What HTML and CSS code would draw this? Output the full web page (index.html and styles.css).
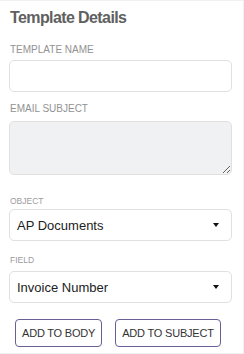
FILE: index.html
```html
<!DOCTYPE html>
<html lang="en">
<head>
  <meta charset="UTF-8" />
  <meta name="viewport" content="width=device-width, initial-scale=1.0" />
  <title>Template Details</title>
  <link rel="stylesheet" href="styles.css">
</head>
<body>
  <div class="card">
    <h2 class="title">Template Details</h2>

    <div class="field name">
      <label class="label">Template Name</label>
      <input class="input" type="text" />
    </div>

    <div class="field subject">
      <label class="label">Email Subject</label>
      <textarea class="input area"></textarea>
    </div>

    <div class="field object">
      <label class="label small">Object</label>
      <div class="select">
        <span>AP Documents</span>
        <span class="caret"></span>
      </div>
    </div>

    <div class="field pick">
      <label class="label small">Field</label>
      <div class="select">
        <span>Invoice Number</span>
        <span class="caret"></span>
      </div>
    </div>

    <div class="actions">
      <button class="btn">ADD TO BODY</button>
      <button class="btn">ADD TO SUBJECT</button>
    </div>
  </div>
</body>
</html>
```

FILE: styles.css
```css
body {
  margin: 0;
  font-family: "Liberation Sans", Arial, sans-serif;
  background: #fff;
}

.card {
  height: 354px;
  box-sizing: border-box;
  border: 1px solid #f0f0f0;
  border-left: none;
  padding: 7px 11px 0 9px;
}

.title {
  margin: 0 0 0 1px;
  font-size: 16px;
  line-height: 20px;
  font-weight: bold;
  color: #606060;
  letter-spacing: -0.6px;
}

.field.name { margin-top: 16px; }
.field.subject { margin-top: 10px; }
.field.object { margin-top: 21px; }
.field.pick { margin-top: 14px; }

.label {
  display: block;
  font-size: 10px;
  line-height: 12px;
  color: #929292;
  text-transform: uppercase;
  margin: 0 0 4px 1px;
}

.subject .label {
  margin-bottom: 6px;
  padding-top: 1px;
}

.label.small {
  font-size: 8.5px;
  line-height: 10px;
  color: #9c9c9c;
  margin-bottom: 3px;
}

.pick .label.small {
  margin-bottom: 6px;
}

.input {
  display: block;
  width: 100%;
  height: 32px;
  box-sizing: border-box;
  border: 1px solid #e0e0e0;
  border-radius: 5px;
  background: #fff;
  font: inherit;
  padding: 0 9px;
}

.area {
  height: 54px;
  background: #f0f1f3;
  resize: vertical;
}

.select {
  display: flex;
  align-items: center;
  justify-content: space-between;
  height: 32px;
  box-sizing: border-box;
  border: 1px solid #e0e0e0;
  border-radius: 5px;
  padding: 0 12px 0 7px;
  font-size: 13px;
  color: #222;
}

.caret {
  width: 0;
  height: 0;
  border-left: 3px solid transparent;
  border-right: 3px solid transparent;
  border-top: 4px solid #111;
}

.actions {
  display: flex;
  gap: 13px;
  margin-top: 16px;
  padding-left: 6px;
}

.btn {
  flex: none;
  height: 28px;
  padding: 0 6px;
  background: #fff;
  border: 1px solid #6b5e95;
  border-radius: 4px;
  font-family: "Liberation Sans", Arial, sans-serif;
  font-size: 11px;
  color: #333;
  letter-spacing: -0.2px;
  white-space: nowrap;
}
```
